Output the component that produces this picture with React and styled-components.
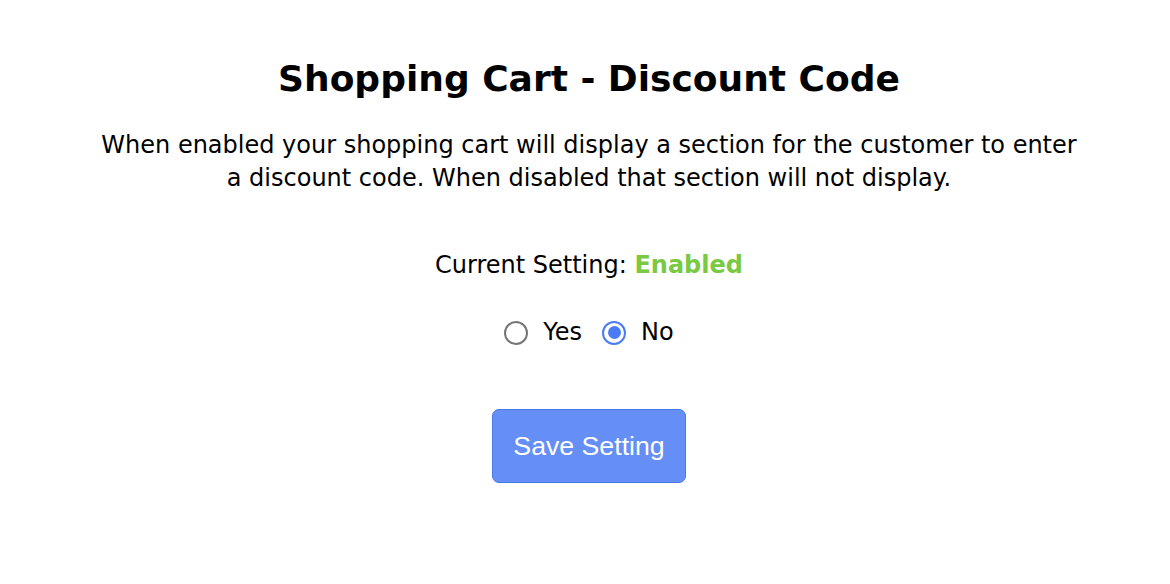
import React, { useState } from "react";
import styled, { createGlobalStyle } from "styled-components";

const Global = createGlobalStyle`
  html, body { margin: 0; padding: 0; background: #fff; }
  body { font-family: "DejaVu Sans", Verdana, sans-serif; color: #000; }
`;

const Page = styled.div`
  display: flex;
  flex-direction: column;
  align-items: center;
  padding: 56px 0 0 8px;
`;

const Title = styled.h1`
  margin: 0;
  font-size: 36px;
  font-weight: bold;
  line-height: 46px;
`;

const Description = styled.p`
  margin: 27px 0 0;
  width: 985px;
  text-align: center;
  font-size: 24px;
  line-height: 33px;
`;

const StatusLine = styled.div`
  margin-top: 54px;
  font-size: 24px;
  line-height: 33px;
`;

const Status = styled.span`
  color: #7ac943;
  font-weight: bold;
`;

const RadioGroup = styled.div`
  margin-top: 34px;
  display: flex;
  align-items: center;
  gap: 20px;
  font-size: 24px;
  line-height: 33px;
`;

const RadioLabel = styled.label`
  display: flex;
  align-items: center;
  gap: 15px;
  cursor: pointer;
`;

const RadioCircle = styled.span`
  width: 24px;
  height: 24px;
  border-radius: 50%;
  box-sizing: border-box;
  border: 2px solid ${(p) => (p.$checked ? "#4b7bf5" : "#767676")};
  display: flex;
  align-items: center;
  justify-content: center;
  background: #fff;
  &::after {
    content: "";
    width: 13px;
    height: 13px;
    border-radius: 50%;
    background: ${(p) => (p.$checked ? "#4b7bf5" : "transparent")};
  }
`;

const Button = styled.button`
  margin-top: 60px;
  width: 194px;
  height: 74px;
  background: #658ef7;
  border: 1.5px solid #4a78e6;
  border-radius: 7px;
  color: #fff;
  font-family: "Liberation Sans", Arial, sans-serif;
  font-size: 26.7px;
  cursor: pointer;
`;

export default function App() {
  const [value, setValue] = useState("no");
  return (
    <>
      <Global />
      <Page>
        <Title>Shopping Cart - Discount Code</Title>
        <Description>
          When enabled your shopping cart will display a section for the customer to enter a
          discount code. When disabled that section will not display.
        </Description>
        <StatusLine>
          Current Setting: <Status>Enabled</Status>
        </StatusLine>
        <RadioGroup>
          <RadioLabel onClick={() => setValue("yes")}>
            <RadioCircle $checked={value === "yes"} />
            Yes
          </RadioLabel>
          <RadioLabel onClick={() => setValue("no")}>
            <RadioCircle $checked={value === "no"} />
            No
          </RadioLabel>
        </RadioGroup>
        <Button>Save Setting</Button>
      </Page>
    </>
  );
}
